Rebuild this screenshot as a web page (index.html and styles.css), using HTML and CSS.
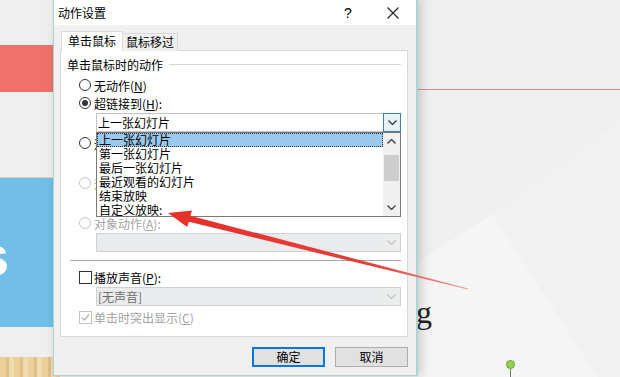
FILE: index.html
```html
<!DOCTYPE html>
<html lang="zh-CN">
<head>
    <meta charset="UTF-8">
    <meta name="viewport" content="width=device-width, initial-scale=1.0">
    <title>动作设置</title>
    <link rel="stylesheet" href="styles.css">
</head>
<body>
    <div class="slide">
        <svg class="facets" width="620" height="377" viewBox="0 0 620 377">
            <polygon points="418,262 492,214 598,377 418,377" fill="#f5f5f5"/>
            <polygon points="492,214 620,120 620,377 598,377" fill="#f1f1f1"/>
        </svg>
        <div class="band-red"></div>
        <div class="rule-red"></div>
        <div class="band-blue"><span class="big-s">s</span></div>
        <div class="wood"></div>
        <span class="letter-g">g</span>
        <div class="pin"></div>
    </div>

    <div class="dialog">
        <div class="titlebar">
            <span class="title">动作设置</span>
            <span class="help">?</span>
            <span class="close">
                <svg width="12" height="12" viewBox="0 0 12 12"><path d="M0.5 0.5 L11.5 11.5 M11.5 0.5 L0.5 11.5" stroke="#222" stroke-width="1.1" fill="none"/></svg>
            </span>
        </div>

        <div class="dialog-body">
            <div class="tabs">
                <div class="tab active">单击鼠标</div>
                <div class="tab">鼠标移过</div>
            </div>

            <div class="panel">
                <div class="group-title">单击鼠标时的动作</div>

                <div class="opt first"><span class="radio"></span>无动作(<u>N</u>)</div>
                <div class="opt"><span class="radio checked"></span>超链接到(<u>H</u>):</div>
                <div class="combo open">
                    <span class="combo-text">上一张幻灯片</span>
                    <span class="combo-btn">
                        <svg width="9" height="5" viewBox="0 0 9 5"><path d="M0.5 0.5 L4.5 4.5 L8.5 0.5" stroke="#333" stroke-width="1.2" fill="none"/></svg>
                    </span>
                </div>
                <!-- these two labels sit under the open list, only a sliver shows -->
                <div class="opt"><span class="radio"></span><span class="covered">运行程序(R):</span></div>
                <div class="combo"><span class="combo-text"></span></div>
                <div class="opt disabled"><span class="radio"></span><span class="covered">运行宏(M):</span></div>
                <div class="combo disabled"><span class="combo-text"></span></div>
                <div class="opt disabled"><span class="radio"></span>对象动作(<u>A</u>):</div>
                <div class="combo disabled">
                    <span class="combo-text"></span>
                    <span class="combo-btn">
                        <svg width="9" height="5" viewBox="0 0 9 5"><path d="M0.5 0.5 L4.5 4.5 L8.5 0.5" stroke="#bdbdbd" stroke-width="1.1" fill="none"/></svg>
                    </span>
                </div>

                <div class="separator"></div>

                <div class="opt sound"><span class="check"></span>播放声音(<u>P</u>):</div>
                <div class="combo disabled">
                    <span class="combo-text">[无声音]</span>
                    <span class="combo-btn">
                        <svg width="9" height="5" viewBox="0 0 9 5"><path d="M0.5 0.5 L4.5 4.5 L8.5 0.5" stroke="#bdbdbd" stroke-width="1.1" fill="none"/></svg>
                    </span>
                </div>
                <div class="opt disabled highlight">
                    <span class="check">
                        <svg width="11" height="11" viewBox="0 0 11 11"><path d="M2 5.5 L4.5 8 L9 2.5" stroke="#b5b5b5" stroke-width="1.3" fill="none"/></svg>
                    </span>单击时突出显示(<u>C</u>)
                </div>

                <div class="droplist">
                    <div class="list-items">
                        <div class="item sel">上一张幻灯片</div>
                        <div class="item">第一张幻灯片</div>
                        <div class="item">最后一张幻灯片</div>
                        <div class="item">最近观看的幻灯片</div>
                        <div class="item">结束放映</div>
                        <div class="item">自定义放映:</div>
                    </div>
                    <div class="scrollbar">
                        <div class="sb-btn">
                            <svg width="9" height="5" viewBox="0 0 9 5"><path d="M0.5 4.5 L4.5 0.5 L8.5 4.5" stroke="#444" stroke-width="1.4" fill="none"/></svg>
                        </div>
                        <div class="sb-track"><div class="sb-thumb"></div></div>
                        <div class="sb-btn">
                            <svg width="9" height="5" viewBox="0 0 9 5"><path d="M0.5 0.5 L4.5 4.5 L8.5 0.5" stroke="#444" stroke-width="1.4" fill="none"/></svg>
                        </div>
                    </div>
                </div>
            </div>

            <div class="footer">
                <button class="btn primary">确定</button>
                <button class="btn">取消</button>
            </div>
        </div>
    </div>

    <svg class="arrow" width="620" height="377" viewBox="0 0 620 377">
        <defs>
            <linearGradient id="shaft" x1="170" y1="213" x2="468" y2="289" gradientUnits="userSpaceOnUse">
                <stop offset="0" stop-color="#e62f2a"/>
                <stop offset="0.7" stop-color="#e8403a"/>
                <stop offset="1" stop-color="#f4a09a"/>
            </linearGradient>
        </defs>
        <polygon points="168,213 192,210.4 190.4,215.7 468.1,288.5 467.9,289.5 188.8,221.8 187.2,227" fill="url(#shaft)"/>
    </svg>
</body>
</html>
```

FILE: styles.css
```css
* {
    box-sizing: border-box;
}
html, body {
    margin: 0;
}
body {
    position: relative;
    width: 620px;
    height: 377px;
    overflow: hidden;
    background-color: #efefef;
    font-family: "Noto Sans CJK SC", sans-serif;
    font-size: 12px;
    color: #000;
}

/* slide behind the dialog */
.slide {
    position: absolute;
    inset: 0;
}
.facets {
    position: absolute;
    left: 0;
    top: 0;
}
.band-red {
    position: absolute;
    left: 0;
    top: 45px;
    width: 60px;
    height: 47px;
    background: #f0716a;
}
.rule-red {
    position: absolute;
    left: 418px;
    right: 0;
    top: 89px;
    height: 1px;
    background: #e58a80;
}
.band-blue {
    position: absolute;
    left: 0;
    top: 177px;
    width: 60px;
    height: 150px;
    overflow: hidden;
    background: #71bfe9;
    border-top: 1px solid #e4d0a8;
}
.big-s {
    position: absolute;
    left: -22px;
    top: 50px;
    font-family: "Liberation Sans", sans-serif;
    font-weight: bold;
    font-size: 56px;
    line-height: 56px;
    color: #fff;
}
.wood {
    position: absolute;
    left: 0;
    top: 357px;
    width: 60px;
    height: 20px;
    background: repeating-linear-gradient(90deg, #ebd09c 0 6px, #dfc088 6px 9px, #f0dbae 9px 14px);
}
.letter-g {
    position: absolute;
    left: 416px;
    top: 296px;
    font-family: "Liberation Serif", serif;
    font-size: 32px;
    line-height: 32px;
    color: #222;
}
.pin {
    position: absolute;
    left: 506px;
    top: 360px;
    width: 9px;
    height: 9px;
    border-radius: 50%;
    background: #93d24f;
    border: 1px solid #6aa33a;
}
.pin::after {
    content: "";
    position: absolute;
    left: 3px;
    top: 8px;
    width: 1px;
    height: 12px;
    background: #777;
}

/* dialog */
.dialog {
    position: absolute;
    left: 53px;
    top: -1px;
    width: 365px;
    height: 377px;
    display: flex;
    flex-direction: column;
    background: #f0f0f0;
    border: 1px solid #a9d6d5;
    border-right-width: 2px;
    box-shadow: 3px 0 10px rgba(0, 0, 0, 0.18);
    z-index: 2;
}
.titlebar {
    display: flex;
    align-items: center;
    height: 25px;
    padding-left: 4px;
    background: #fff;
}
.title {
    flex: 1;
}
.help {
    width: 44px;
    text-align: center;
    font-family: "Liberation Sans", sans-serif;
    font-size: 14px;
}
.close {
    width: 46px;
    display: flex;
    justify-content: center;
}
.dialog-body {
    flex: 1;
    display: flex;
    flex-direction: column;
    padding: 6px 8px 0 6px;
}
.tabs {
    position: relative;
    z-index: 1;
    display: flex;
    align-items: flex-end;
    margin-left: 1px;
    margin-bottom: -1px;
}
.tab {
    height: 18px;
    padding: 0 3px;
    line-height: 16px;
    background: #f0f0f0;
    border: 1px solid #d9d9d9;
    border-left: none;
    border-bottom: none;
}
.tab.active {
    height: 20px;
    padding: 0 6px;
    line-height: 18px;
    background: #fff;
    border-left: 1px solid #d9d9d9;
}
.panel {
    position: relative;
    height: 287px;
    padding: 5px 6px 0 6px;
    background: #fff;
    border: 1px solid #d9d9d9;
}
.group-title {
    display: flex;
    align-items: center;
    height: 16px;
}
.group-title::after {
    content: "";
    flex: 1;
    margin-left: 6px;
    border-top: 1px solid #d6d6d6;
}
.opt {
    display: flex;
    align-items: center;
    height: 18px;
    margin-left: 12px;
}
.opt.first {
    margin-top: 4px;
}
.opt.sound {
    margin-top: 7px;
}
.opt.highlight {
    margin-top: 1px;
}
.opt.disabled {
    color: #a3a3a3;
}
.covered {
    width: 3px;
    overflow: hidden;
    white-space: nowrap;
}
.radio {
    position: relative;
    width: 12px;
    height: 12px;
    margin-right: 3px;
    border: 1px solid #333;
    border-radius: 50%;
    background: #fff;
}
.radio.checked::after {
    content: "";
    position: absolute;
    inset: 2px;
    border-radius: 50%;
    background: #333;
}
.opt.disabled .radio,
.opt.disabled .check {
    border-color: #c4c4c4;
}
.check {
    display: flex;
    align-items: center;
    justify-content: center;
    width: 13px;
    height: 13px;
    margin-right: 2px;
    border: 1px solid #333;
    background: #fff;
}
.combo {
    display: flex;
    height: 19px;
    margin: 1px 0 2px 29px;
    background: #fff;
    border: 1px solid #c4c4c4;
}
.combo-text {
    flex: 1;
    padding-left: 1px;
    line-height: 17px;
}
.combo-btn {
    display: flex;
    align-items: center;
    justify-content: center;
    width: 17px;
}
.combo.open .combo-btn {
    margin: -1px -1px -1px 0;
    width: 18px;
    background: #e5f1fb;
    border: 1px solid #3c7fb1;
}
.combo.disabled {
    background: #eaebec;
    border-color: #cdd1d6;
    color: #6d6d6d;
}
.combo.disabled .combo-btn {
    background: #eceded;
}
.separator {
    height: 1px;
    margin: 8px 0 0 3px;
    background: #a8a8a8;
}
.droplist {
    position: absolute;
    left: 35px;
    top: 81px;
    width: 305px;
    height: 85px;
    display: flex;
    background: #fff;
    border: 1px solid #7a7a7a;
}
.list-items {
    flex: 1;
}
.item {
    height: 14px;
    padding-left: 2px;
    line-height: 14px;
}
.item.sel {
    background: #99c9ef;
    outline: 1px dotted #333;
    outline-offset: -1px;
}
.scrollbar {
    display: flex;
    flex-direction: column;
    width: 17px;
    background: #f0f0f0;
}
.sb-btn {
    display: flex;
    align-items: center;
    justify-content: center;
    height: 17px;
}
.sb-track {
    flex: 1;
    padding: 5px 1px 0;
}
.sb-thumb {
    height: 26px;
    background: #cdcdcd;
}
.footer {
    display: flex;
    justify-content: flex-end;
    gap: 10px;
    padding-top: 10px;
}
.btn {
    width: 73px;
    height: 20px;
    padding: 0;
    font-family: "Noto Sans CJK SC", sans-serif;
    font-size: 12px;
    line-height: 16px;
    color: #000;
    background: #e1e1e1;
    border: 1px solid #adadad;
}
.btn.primary {
    border-color: #0078d7;
    box-shadow: inset 0 0 0 1px #0078d7;
}

.arrow {
    position: absolute;
    left: 0;
    top: 0;
    z-index: 3;
    pointer-events: none;
}
```
